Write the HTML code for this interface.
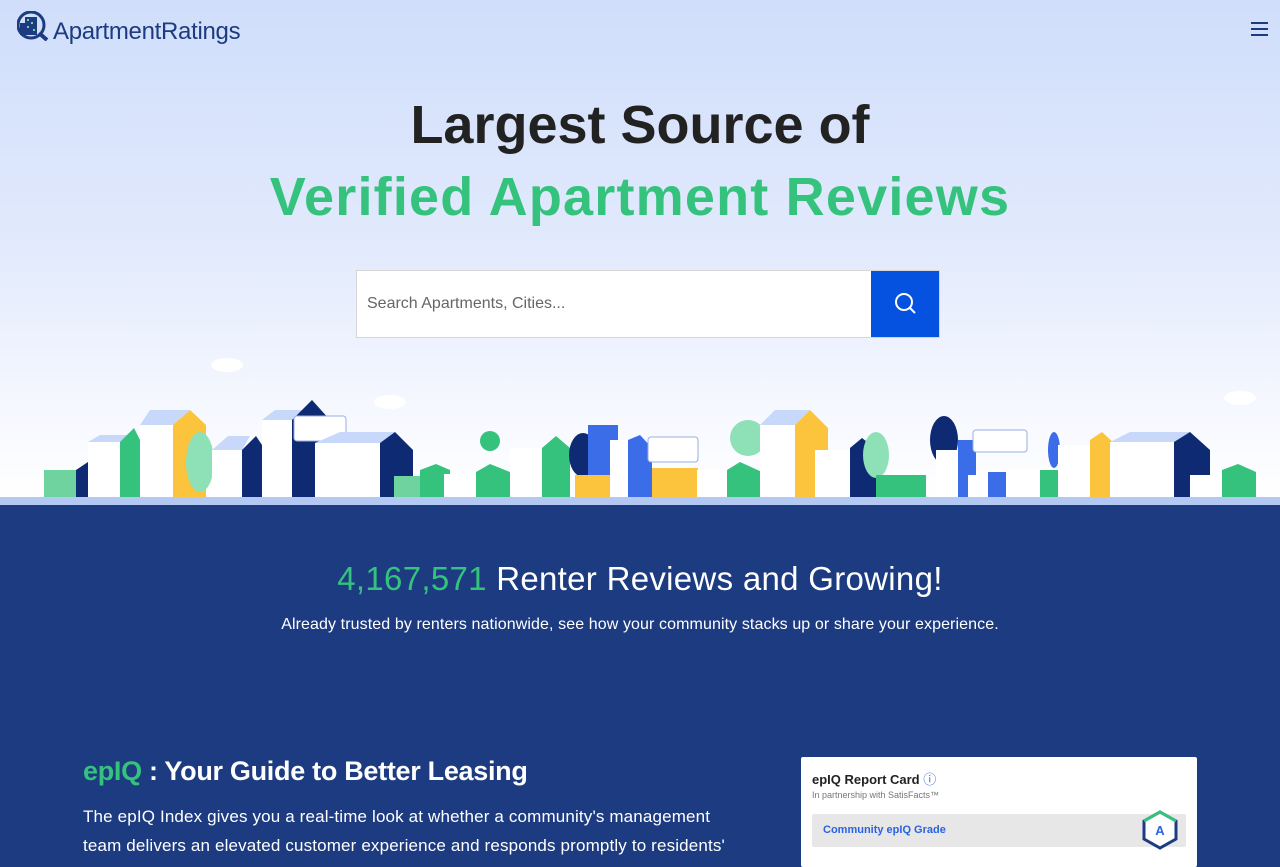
<!DOCTYPE html>
<html><head><meta charset="utf-8"><style>
*{margin:0;padding:0;box-sizing:border-box}
body{width:1280px;height:853px;overflow:hidden;font-family:"Liberation Sans",sans-serif;background:#1c3b80}
.hero{position:absolute;left:0;top:0;width:1280px;height:505px;background:linear-gradient(#d0defb 0,#e2eafc 250px,#f7f9ff 420px,#fff 500px)}
.logo{position:absolute;left:17px;top:11px;display:flex;align-items:center}
.logo span{font-size:24px;color:#1c3b80;margin-left:4px;letter-spacing:-0.3px;position:relative;top:6px}
.menu{position:absolute;right:12px;top:22px;width:17px}
.menu i{display:block;height:2px;background:#1c3b80;margin-bottom:4px}
h1{position:absolute;left:0;width:1280px;text-align:center;font-weight:bold;font-size:54px}
.h1a{top:94px;color:#222;letter-spacing:0px}
.h1b{top:166px;color:#34c27d;letter-spacing:1.2px}
.search{position:absolute;left:356px;top:270px;width:584px;height:68px;border:1px solid #d6d6d6;background:#fff}
.search span{position:absolute;left:10px;top:24px;font-size:16px;color:#666}
.search b{position:absolute;right:0;top:0;width:68px;height:66px;background:#0652e0}
.ground{position:absolute;left:0;top:497px;width:1280px;height:8px;background:#b4c8f4}
.stats{position:absolute;top:560px;width:1280px;text-align:center;color:#fff}
.stats .big{font-size:33px;letter-spacing:0.3px}
.stats .small{font-size:16px;margin-top:18px;letter-spacing:0.1px}
.stats .big em{font-style:normal;color:#34c27d}
.epiq{position:absolute;left:83px;top:756px;color:#fff;font-size:27px;font-weight:bold;letter-spacing:-0.3px}
.epiq em{font-style:normal;color:#34c27d}
.desc{position:absolute;left:83px;top:802px;width:665px;color:#fff;font-size:17px;line-height:29px;letter-spacing:0.15px}
.card{position:absolute;left:801px;top:757px;width:396px;height:110px;background:#fff;border-radius:2px}
.card .t{position:absolute;left:11px;top:12px;font-size:13px;font-weight:bold;color:#222}
.card .s{position:absolute;left:11px;top:33px;font-size:9px;color:#777}
.card .g{position:absolute;left:11px;top:57px;width:374px;height:33px;background:#e7e7e7;border-radius:2px}
.card .g span{position:absolute;left:11px;top:10px;font-size:11px;font-weight:bold;color:#2a62e0}
</style></head><body>
<div class="hero">
 <div class="logo"><svg width="32" height="30" viewBox="0 0 32 30"><circle cx="14" cy="14" r="13" fill="none" stroke="#1c3b80" stroke-width="3"/><rect x="8" y="6" width="12" height="18" fill="#1c3b80"/><rect x="3" y="12" width="6" height="12" fill="#1c3b80"/><g fill="#6fd3a0"><rect x="10" y="8" width="2" height="2"/><rect x="14" y="11" width="2" height="2"/><rect x="10" y="15" width="2" height="2"/><rect x="16" y="18" width="2" height="2"/></g><path d="M22 22l8 7" stroke="#1c3b80" stroke-width="4"/></svg><span>ApartmentRatings</span></div>
 <div class="menu"><i></i><i></i><i></i></div>
 <h1 class="h1a">Largest Source of</h1>
 <h1 class="h1b">Verified Apartment Reviews</h1>
 <div class="search"><span>Search Apartments, Cities...</span><b><svg width="68" height="66"><circle cx="33" cy="31" r="8" fill="none" stroke="#fff" stroke-width="2"/><path d="M39 37l5 5" stroke="#fff" stroke-width="2"/></svg></b></div>
 <svg style="position:absolute;left:0;top:340px" width="1280" height="160">
  <g fill="#fff"><ellipse cx="227" cy="25" rx="16" ry="7"/><ellipse cx="390" cy="62" rx="16" ry="7"/><ellipse cx="1240" cy="58" rx="16" ry="7"/></g>
  <g>
   <rect x="44" y="130" width="32" height="28" fill="#6fd3a0"/>
   <polygon points="76,130 88,122 88,158 76,158" fill="#0e2a72"/>
   <rect x="88" y="102" width="32" height="56" fill="#fff"/><polygon points="88,102 100,95 134,95 120,102" fill="#c8d8fb"/>
   <polygon points="120,102 134,88 140,100 140,158 120,158" fill="#34c27d"/>
   <rect x="140" y="85" width="33" height="73" fill="#fff"/><polygon points="140,85 150,70 190,70 173,85" fill="#c8d8fb"/>
   <polygon points="173,85 190,70 206,85 206,158 173,158" fill="#fcc33c"/>
   <ellipse cx="200" cy="122" rx="14" ry="30" fill="#8ee0b6"/>
   <rect x="212" y="110" width="30" height="48" fill="#fff"/><polygon points="212,110 228,96 250,96 242,110" fill="#c8d8fb"/>
   <polygon points="242,110 256,96 262,105 262,158 242,158" fill="#0e2a72"/>
   <rect x="262" y="80" width="30" height="78" fill="#fff"/><polygon points="262,80 275,70 310,70 292,80" fill="#c8d8fb"/>
   <polygon points="292,80 312,60 330,80 330,158 292,158" fill="#0e2a72"/>
   <rect x="294" y="76" width="52" height="25" rx="3" fill="#fff" stroke="#9aaee0"/>
   <rect x="315" y="103" width="65" height="55" fill="#fff"/><polygon points="315,103 340,92 395,92 380,103" fill="#c8d8fb"/>
   <polygon points="380,103 395,92 413,110 413,158 380,158" fill="#0e2a72"/>
   <rect x="394" y="136" width="30" height="22" fill="#6fd3a0"/><polygon points="420,130 436,124 450,130 450,158 420,158" fill="#34c27d"/>
   <rect x="444" y="134" width="32" height="24" fill="#fff"/><polygon points="476,132 490,124 510,132 510,158 476,158" fill="#34c27d"/>
   <circle cx="490" cy="101" r="10" fill="#34c27d"/>
   <rect x="510" y="108" width="32" height="50" fill="#fff"/><polygon points="542,108 556,96 570,108 570,158 542,158" fill="#34c27d"/>
   <ellipse cx="583" cy="115" rx="14" ry="22" fill="#0e2a72"/>
   <rect x="588" y="85" width="30" height="73" fill="#3b6de8"/>
   <rect x="575" y="135" width="38" height="23" fill="#fcc33c"/>
   <rect x="610" y="100" width="30" height="58" fill="#fff"/><polygon points="628,100 640,95 652,108 652,158 628,158" fill="#3b6de8"/>
   <rect x="648" y="97" width="50" height="25" rx="3" fill="#fff" stroke="#9aaee0"/>
   <rect x="652" y="128" width="46" height="30" fill="#fcc33c"/><rect x="697" y="130" width="30" height="28" fill="#fff"/>
   <polygon points="727,130 740,122 762,132 762,158 727,158" fill="#34c27d"/>
   <circle cx="748" cy="98" r="18" fill="#8ee0b6"/>
   <rect x="760" y="85" width="35" height="73" fill="#fff"/><polygon points="760,85 775,70 810,70 795,85" fill="#c8d8fb"/>
   <polygon points="795,85 810,70 828,88 828,158 795,158" fill="#fcc33c"/>
   <rect x="815" y="110" width="35" height="48" fill="#fff"/><polygon points="850,108 862,98 880,112 880,158 850,158" fill="#0e2a72"/>
   <ellipse cx="876" cy="115" rx="13" ry="23" fill="#8ee0b6"/>
   <rect x="876" y="135" width="50" height="23" fill="#34c27d"/>
   <ellipse cx="944" cy="100" rx="14" ry="24" fill="#0e2a72"/>
   <rect x="936" y="110" width="40" height="48" fill="#fff"/><rect x="958" y="100" width="18" height="58" fill="#3b6de8"/>
   <rect x="973" y="90" width="54" height="22" rx="3" fill="#fff" stroke="#9aaee0"/>
   <rect x="968" y="135" width="42" height="23" fill="#fff"/><rect x="988" y="132" width="18" height="26" fill="#3b6de8"/>
   <rect x="1006" y="130" width="34" height="28" fill="#fff"/><rect x="1040" y="130" width="32" height="28" fill="#34c27d"/>
   <ellipse cx="1054" cy="110" rx="6" ry="18" fill="#3b6de8"/>
   <rect x="1058" y="105" width="32" height="53" fill="#fff"/><polygon points="1090,100 1102,92 1116,105 1116,158 1090,158" fill="#fcc33c"/>
   <rect x="1110" y="102" width="64" height="56" fill="#fff"/><polygon points="1110,102 1130,92 1190,92 1174,102" fill="#c8d8fb"/>
   <polygon points="1174,102 1190,92 1210,110 1210,158 1174,158" fill="#0e2a72"/>
   <rect x="1190" y="135" width="32" height="23" fill="#fff"/><polygon points="1222,130 1238,124 1256,132 1256,158 1222,158" fill="#34c27d"/>
  </g>
 </svg>
</div>
<div class="ground"></div>
<div class="stats"><div class="big"><em>4,167,571</em> Renter Reviews and Growing!</div><div class="small">Already trusted by renters nationwide, see how your community stacks up or share your experience.</div></div>
<div class="epiq"><em>epIQ</em> : Your Guide to Better Leasing</div>
<div class="desc">The epIQ Index gives you a real-time look at whether a community's management team delivers an elevated customer experience and responds promptly to residents'</div>
<div class="card"><div class="t">epIQ Report Card <span style="color:#2a62e0;font-weight:normal">ⓘ</span></div><div class="s">In partnership with SatisFacts™</div><div class="g"><span>Community epIQ Grade</span>
<svg style="position:absolute;left:328px;top:-5px" width="40" height="42"><polygon points="20,3 36,12 36,30 20,39 4,30 4,12" fill="#fff" stroke="#1c3b80" stroke-width="3"/><polyline points="4,12 20,3 36,12" fill="none" stroke="#34c27d" stroke-width="3"/><text x="20" y="26" text-anchor="middle" font-size="13" font-weight="bold" fill="#2a62e0" font-family="Liberation Sans">A</text></svg></div></div>
</body></html>
